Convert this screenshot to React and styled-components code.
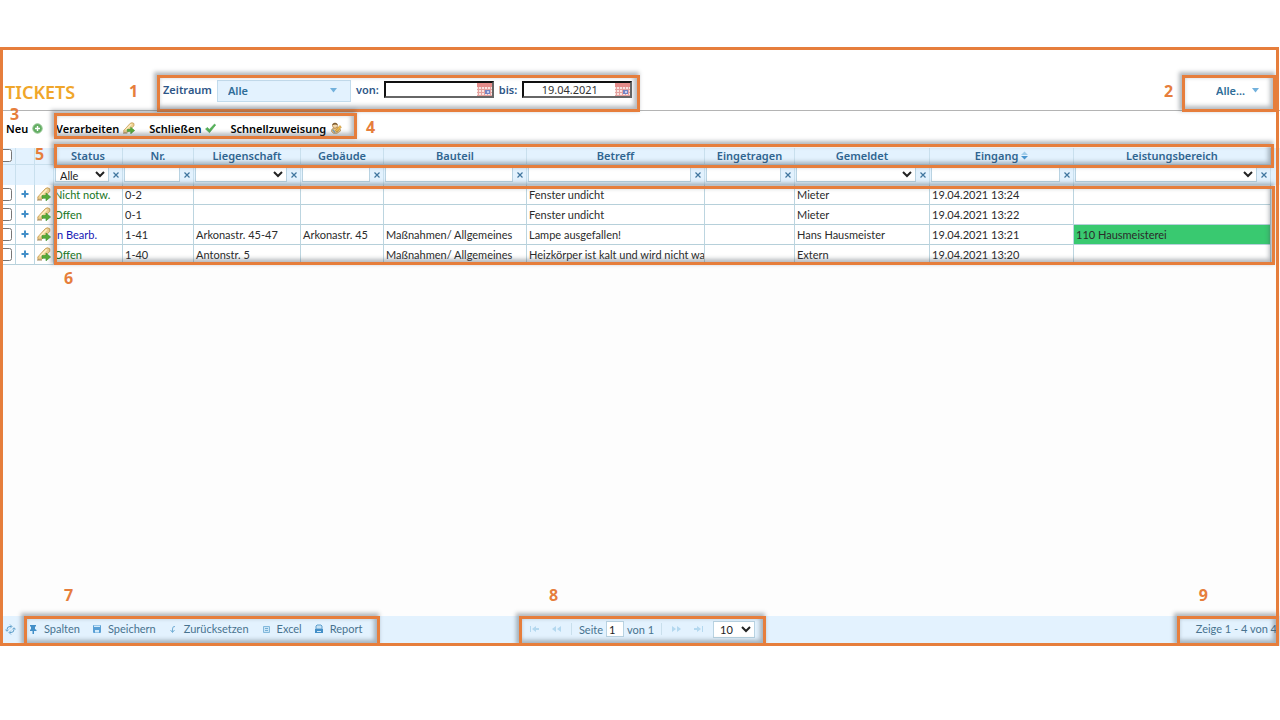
import React from "react";
import styled, { createGlobalStyle } from "styled-components";

const GlobalStyle = createGlobalStyle`
    *{
        box-sizing: border-box;
    }

    body{
        background: #ffffff;
        font-family: "Noto Sans", "Open Sans", sans-serif;
        font-size: 11px;
        margin: 0;
    }

    button, input, select{
        color: inherit;
        font: inherit;
        margin: 0;
    }
`;

const Page = styled.div`
    display: flex;
    flex-direction: column;
    min-height: 100vh;
    padding: 47px 0 74px;
`;

const Shell = styled.main`
    display: flex;
    flex: 1;
    flex-direction: column;
    overflow: hidden;
    position: relative;

    &::after{
        border: 3px solid #e67e3c;
        content: "";
        inset: 0 1px 0 0;
        pointer-events: none;
        position: absolute;
        z-index: 3;
    }
`;

const Outline = styled.div`
    border: 3px solid #e67e3c;
    box-shadow: -2px -2px 4px 1px rgba(70, 80, 90, 0.4), inset -2px -2px 4px 1px rgba(70, 80, 90, 0.4);
    inset: ${({ $inset }) => $inset || "0"};
    pointer-events: none;
    position: absolute;
    z-index: 2;
`;

const HeadOutline = styled(Outline)`
    height: 24px;
`;

const Marker = styled.span`
    color: #e67e3c;
    font-family: "Noto Sans", "Open Sans", sans-serif;
    font-size: 16px;
    font-weight: 700;
    left: ${({ $left }) => $left};
    line-height: 16px;
    position: absolute;
    top: ${({ $top }) => $top};
    z-index: 2;
`;

const Header = styled.header`
    border-bottom: 1px solid #b4b4b4;
    color: #2e5687;
    display: flex;
    font-weight: 600;
    height: 64px;
    padding: 28px 4px 0 5px;
    position: relative;

    h1{
        color: #f0a62a;
        font-size: 18px;
        font-weight: 600;
        line-height: 34px;
        margin: 0;
        width: 152px;
    }
`;

const PeriodFilter = styled.div`
    display: flex;
    gap: 5px;
    height: 37px;
    padding: 5px 8px 0 6px;
    position: relative;

    label{
        line-height: 20px;
    }
`;

const Dropdown = styled.div`
    color: #2f6d98;
    height: 22px;
    position: relative;
    width: ${({ $plain }) => ($plain ? "54px" : "134px")};

    select{
        appearance: none;
        background: ${({ $plain }) => ($plain ? "transparent" : "#e3f2fe")};
        border: ${({ $plain }) => ($plain ? "0" : "1px solid #c3dced")};
        border-radius: 0;
        height: 100%;
        padding: ${({ $plain }) => ($plain ? "0 0 2px" : "0 10px 1px")};
        width: 100%;
    }

    svg{
        pointer-events: none;
        position: absolute;
        right: ${({ $plain }) => ($plain ? "11px" : "14px")};
        top: 8px;
    }
`;

const DateField = styled.div`
    background: #ffffff;
    border: 2px solid;
    border-color: #111111 #666666 #666666 #111111;
    color: #333333;
    display: flex;
    font-weight: 400;
    height: 17px;
    margin-top: 1px;
    width: 110px;

    input{
        border: 0;
        flex: 1;
        height: 13px;
        min-width: 0;
        padding: 0;
        text-align: center;
    }

    button{
        background: none;
        border: 0;
        display: flex;
        height: 13px;
        padding: 0;
    }
`;

const ScopeFilter = styled.div`
    height: 37px;
    margin-left: auto;
    padding: 5px 6px 0 34px;
    position: relative;
    width: 94px;
`;

const Toolbar = styled.div`
    align-items: flex-start;
    display: flex;
    height: 37px;
    padding: 2px 0 0 6px;
    position: relative;
`;

const ActionGroup = styled.div`
    display: flex;
    gap: 14px;
    padding: 0 15px 0 2px;
    position: relative;
`;

const Action = styled.button`
    align-items: center;
    background: none;
    border: 0;
    color: #000000;
    display: flex;
    font-weight: 600;
    gap: 4px;
    height: 26px;
    padding: 4px 0 0;
    width: ${({ $width }) => $width || "auto"};
`;

const GridArea = styled.section`
    background: #fdfdfd;
    flex: 1;
    position: relative;
`;

const TableHolder = styled.div`
    background: linear-gradient(#e3f2fe, #e3f2fe) 0 0 / 100% 37px no-repeat;
    padding-right: 9px;
    position: relative;
`;

const Table = styled.table`
    border-collapse: separate;
    border-spacing: 0;
    color: #2b2b2b;
    table-layout: fixed;
    width: 100%;

    th, td{
        border-right: 1px solid #bcd5e0;
        overflow: hidden;
        padding: 0;
        white-space: nowrap;
    }

    th{
        border-bottom: 1px solid #c9e0ee;
        border-right-color: #c9e0ee;
        color: #2f6591;
        font-weight: 600;
        height: 17px;
        line-height: 15px;
        padding-bottom: 1px;
        text-align: center;
    }

    .filters td{
        border-right-color: #c9e0ee;
        height: 20px;
        vertical-align: top;
    }

    tbody{
        font-family: Lato, "Noto Sans", sans-serif;
    }

    tbody td{
        background: #ffffff;
        border-bottom: 1px solid #b6d0da;
        height: 20px;
        line-height: 19px;
        padding-left: 2px;
    }

    tbody .status{
        padding-left: 0;
    }

    tbody .area{
        background: #39c970;
    }

    tbody .tool{
        padding: 0;
        text-align: center;
    }

    tbody .tool button{
        background: none;
        border: 0;
        display: block;
        height: 18px;
        margin: 0 auto;
        padding: 1px 0 0;
    }

    input[type="checkbox"]{
        display: block;
        height: 13px;
        margin: 0 0 0 -1px;
        width: 13px;
    }
`;

const StatusText = styled.span`
    color: ${({ $open }) => ($open ? "#17741d" : "#1616b4")};
`;

const Filter = styled.div`
    display: flex;
    height: 16px;
    margin: 2px 0 0 1px;

    input, select{
        background: #ffffff;
        border: 1px solid #b9d3e2;
        border-radius: 0;
        color: #222222;
        flex: 1;
        font-family: Lato, "Noto Sans", sans-serif;
        height: 15px;
        line-height: 13px;
        min-width: 0;
        padding: 0;
    }

    button{
        align-items: center;
        background: none;
        border: 0;
        color: #2f6591;
        display: flex;
        justify-content: center;
        padding: 0;
        width: 13px;
    }
`;

const Footer = styled.footer`
    background: #e3f2fe;
    color: #48738f;
    display: grid;
    font-family: Lato, "Noto Sans", sans-serif;
    grid-template-columns: 1fr auto 1fr;
    height: 30px;
    padding-right: 1px;
    position: relative;
`;

const FooterSide = styled.div`
    display: flex;
    justify-content: ${({ $end }) => ($end ? "flex-end" : "flex-start")};
`;

const FooterGroup = styled.div`
    align-items: center;
    display: flex;
    gap: ${({ $gap }) => $gap};
    height: 30px;
    padding: ${({ $padding }) => $padding};
    position: relative;
    white-space: nowrap;
`;

const PagerGroup = styled(FooterGroup)`
    margin-left: 6px;
`;

const FooterButton = styled.button`
    align-items: center;
    background: none;
    border: 0;
    display: flex;
    gap: 6px;
    height: 22px;
    padding: 0;
`;

const StepButton = styled(FooterButton)`
    padding: 0 3px;
`;

const RefreshButton = styled(FooterButton)`
    justify-content: center;
    margin: 2px 4px 0 0;
    width: 20px;
`;

const PageInput = styled.input`
    && {
        background: #ffffff;
        border: 1px solid #b9d3e2;
        color: #222222;
        height: 16px;
        margin: 0 3px;
        padding: 0 2px;
        width: 18px;
    }
`;

const PageSize = styled.select`
    && {
        background: #ffffff;
        border: 1px solid #b9d3e2;
        border-radius: 0;
        color: #222222;
        height: 17px;
        padding: 0 2px;
        width: 42px;
    }
`;

const Separator = styled.i`
    background: #c9dfec;
    height: 12px;
    width: 1px;
`;

const Triangle = () => (
    <svg width="7" height="5" viewBox="0 0 7 5"><path d="M0 0h7L3.500 4.500z" fill="#72b1dc" /></svg>
);

const CalendarIcon = () => (
    <svg width="15" height="13" viewBox="0 0 15 13">
        <rect width="15" height="13" fill="#f9e3e0" />
        <rect width="15" height="4" fill="#e58c8a" />
        <path d="M0 6.500h15M0 9.500h15M0 12.500h15M1.500 4v9M4.500 4v9M7.500 4v9M10.500 4v9M13.500 4v9" stroke="#e5a19f" />
        <rect x="8" y="7" width="5" height="4" fill="#7484c4" />
        <rect x="10" y="8" width="2" height="2" fill="#c8d0ef" />
    </svg>
);

const PlusBall = () => (
    <svg width="11" height="11" viewBox="0 0 11 11">
        <circle cx="5.500" cy="5.500" r="4.700" fill="#62ad62" stroke="#8fc48d" />
        <path d="M5.500 3v5M3 5.500h5" stroke="#ffffff" strokeWidth="1.400" />
    </svg>
);

const EditIcon = ({ size = 12 }) => (
    <svg width={size} height={size} viewBox="0 0 14 14">
        <path d="M0.800 10L8.500 1.500Q10.500 0 12.800 1.800L12.800 4.500L5 12L1 12.500z" fill="#eed293" stroke="#c59a50" strokeWidth="0.900" />
        <path d="M3 9.200L9.800 2.500" stroke="#fff0c8" strokeWidth="1.400" />
        <path d="M5 8.600h4V6l4.600 4-4.600 3.800v-2.600H5z" fill="#58ad39" stroke="#469735" strokeWidth="0.700" />
        <path d="M0 13h5" stroke="#a48b62" />
    </svg>
);

const CheckIcon = () => (
    <svg width="11" height="11" viewBox="0 0 11 11">
        <path d="M0.500 6L2.500 4.500L4.300 6.500L9.500 1L10.700 2L4.500 9.700z" fill="#55b255" stroke="#4aa355" strokeWidth="0.600" />
    </svg>
);

const AssignIcon = () => (
    <svg width="12" height="12" viewBox="0 0 12 12">
        <path d="M1.500 9.500Q1 6.500 4 6L8 5.500Q11 6.500 10.500 9L7 11.300H3.500z" fill="#efc887" stroke="#b58a4a" strokeWidth="0.700" />
        <path d="M2.500 3.500Q2.800 1.200 5 1.200T7.600 3.500Q7.500 6.200 5 6.200T2.500 3.500z" fill="#f4d9aa" stroke="#a97a40" strokeWidth="0.700" />
        <path d="M2 3.200Q2.500 0.500 5.200 0.700Q7.500 1 7.800 3L5 2.500z" fill="#7c5a30" />
        <path d="M5.500 8.500L9.800 3.600L11.400 5L7 10z" fill="#f1bd4c" stroke="#b98433" strokeWidth="0.600" />
        <path d="M2.500 7.500L5 10.500" stroke="#7aa0bb" strokeWidth="1.400" />
    </svg>
);

const RowPlus = () => (
    <svg width="8" height="14" viewBox="0 0 8 14"><path d="M4 3.500v7M0.500 7h7" stroke="#438fc8" strokeWidth="2" /></svg>
);

const ClearIcon = () => (
    <svg width="6" height="6" viewBox="0 0 6 6"><path d="M0.500 0.500l5 5M5.500 0.500l-5 5" stroke="#3f759e" strokeWidth="1.200" /></svg>
);

const SortIcon = () => (
    <svg width="7" height="9" viewBox="0 0 7 9"><path d="M0 4L3.500 0.500L7 4z" fill="#9fcbe8" /><path d="M0 5L3.500 8.500L7 5z" fill="#4a96cf" /></svg>
);

const RefreshIcon = () => (
    <svg width="11" height="11" viewBox="0 0 11 11" fill="none" stroke="#5a9cc8">
        <path d="M2 7V5.500Q2 2.500 5 2.500H6.500M9 4V5.500Q9 8.500 6 8.500H4.500" />
        <path d="M5 0.500L7 2.500L5 4.500M6 6.500L4 8.500L6 10.500M0.300 5.500L2 7.300L3.700 5.500M7.300 5.500L9 3.700L10.700 5.500" strokeWidth="0.800" />
    </svg>
);

const footerIcons = {
    pin: <path d="M2 1h6v1.500H7V5l1.500 1v1H6v3H4.500V7H2V6l1-1V2.500H2z" fill="#438fc8" />,
    save: <><rect x="1" y="1" width="8" height="8" rx="1" fill="#5aa0d6" /><path d="M2 1.500h6v1.500H2zM3 6h4v2.500H3z" fill="#d2eafa" /></>,
    reset: <path d="M7 2.500Q4.500 2 4.500 5V8M2.500 6l2 2.500 2-2.500" fill="none" stroke="#75afd5" />,
    excel: <><path d="M2.500 2.500h6v6h-6z" fill="#cae5f7" stroke="#83b9dc" /><path d="M4 4.500h3M4 6.500h3" stroke="#75afd5" /></>,
    report: <><path d="M2 5V2l1-1h4l1 1v3z" fill="#c6e2f5" stroke="#5e9fcd" /><path d="M1 5h8v4H1z" fill="#438fc8" /><path d="M3 7.500h4" stroke="#d2eafa" /></>,
};

const pagerIcons = {
    first: "M1 1v6H0V1zM2 4l4-3v6zM6 3h3v2H6z",
    prev: "M0 4l4-3v6zM5 4l4-3v6z",
    next: "M0 1l4 3-4 3zM5 1l4 3-4 3z",
    last: "M0 3h3v2H0zM3 1l4 3-4 3zM8 1h1v6H8z",
};

const FooterIcon = ({ name }) => <svg width="10" height="10" viewBox="0 0 10 10">{footerIcons[name]}</svg>;

const PagerButton = ({ name, label }) => (
    <StepButton disabled aria-label={label}>
        <svg width="9" height="8" viewBox="0 0 9 8"><path d={pagerIcons[name]} fill="#b4d8ef" /></svg>
    </StepButton>
);

const columns = [
    { title: "Status", width: 69, filter: "select", value: "Alle" },
    { title: "Nr.", width: 71, filter: "input" },
    { title: "Liegenschaft", width: 107, filter: "select" },
    { title: "Gebäude", width: 83, filter: "input" },
    { title: "Bauteil", width: 143, filter: "input" },
    { title: "Betreff", width: 178, filter: "input" },
    { title: "Eingetragen", width: 90, filter: "input" },
    { title: "Gemeldet", width: 135, filter: "select" },
    { title: "Eingang", width: 144, filter: "input", sorted: true },
    { title: "Leistungsbereich", width: 197, filter: "select" },
];

const tickets = [
    ["Nicht notw.", "0-2", "", "", "", "Fenster undicht", "", "Mieter", "19.04.2021 13:24", ""],
    ["Offen", "0-1", "", "", "", "Fenster undicht", "", "Mieter", "19.04.2021 13:22", ""],
    ["In Bearb.", "1-41", "Arkonastr. 45-47", "Arkonastr. 45", "Maßnahmen/ Allgemeines", "Lampe ausgefallen!", "", "Hans Hausmeister", "19.04.2021 13:21", "110 Hausmeisterei"],
    ["Offen", "1-40", "Antonstr. 5", "", "Maßnahmen/ Allgemeines", "Heizkörper ist kalt und wird nicht wa", "", "Extern", "19.04.2021 13:20", ""],
];

const ColumnFilter = ({ column }) => (
    <Filter>
        {column.filter === "select" ? (
            <select aria-label={column.title}><option>{column.value || ""}</option></select>
        ) : (
            <input type="text" aria-label={column.title} />
        )}
        <button aria-label={`${column.title} leeren`}><ClearIcon /></button>
    </Filter>
);

const TicketTable = () => (
    <Table>
        <colgroup>
            <col style={{ width: 16 }} />
            <col style={{ width: 19 }} />
            <col style={{ width: 19 }} />
            {columns.map(({ title, width }) => <col key={title} style={{ width }} />)}
        </colgroup>
        <thead>
            <tr>
                <th><input type="checkbox" aria-label="Alle auswählen" /></th>
                <th />
                <th />
                {columns.map(({ title, sorted }) => (
                    <th key={title} scope="col">{title}{sorted && <> <SortIcon /></>}</th>
                ))}
            </tr>
            <tr className="filters">
                <td />
                <td />
                <td />
                {columns.map((column) => <td key={column.title}><ColumnFilter column={column} /></td>)}
            </tr>
        </thead>
        <tbody>
            {tickets.map((ticket) => (
                <tr key={ticket[1]}>
                    <td className="tool"><input type="checkbox" aria-label={`Ticket ${ticket[1]}`} /></td>
                    <td className="tool"><button aria-label="Aufklappen"><RowPlus /></button></td>
                    <td className="tool"><button aria-label="Bearbeiten"><EditIcon size={14} /></button></td>
                    {ticket.map((text, i) => {
                        if (i === 0) {
                            return <td key={i} className="status"><StatusText $open={text !== "In Bearb."}>{text}</StatusText></td>;
                        }
                        return <td key={i} className={i === 9 && text ? "area" : undefined}>{text}</td>;
                    })}
                </tr>
            ))}
        </tbody>
    </Table>
);

const App = () => (
    <Page>
        <GlobalStyle />
        <Shell>
            <Header>
                <h1>TICKETS</h1>
                <PeriodFilter>
                    <label htmlFor="period">Zeitraum</label>
                    <Dropdown>
                        <select id="period"><option>Alle</option></select>
                        <Triangle />
                    </Dropdown>
                    <label htmlFor="from">von:</label>
                    <DateField>
                        <input id="from" type="text" />
                        <button aria-label="Kalender von"><CalendarIcon /></button>
                    </DateField>
                    <label htmlFor="until">bis:</label>
                    <DateField>
                        <input id="until" type="text" defaultValue="19.04.2021" />
                        <button aria-label="Kalender bis"><CalendarIcon /></button>
                    </DateField>
                    <Outline />
                    <Marker $left="-28px" $top="8px">1</Marker>
                </PeriodFilter>
                <ScopeFilter>
                    <Dropdown $plain>
                        <select aria-label="Bereich"><option>Alle...</option></select>
                        <Triangle />
                    </Dropdown>
                    <Outline />
                    <Marker $left="-18px" $top="8px">2</Marker>
                </ScopeFilter>
            </Header>

            <Toolbar>
                <Action $width="48px">Neu <PlusBall /></Action>
                <Marker $left="10px" $top="-5px">3</Marker>
                <ActionGroup>
                    <Action>Verarbeiten <EditIcon /></Action>
                    <Action>Schließen <CheckIcon /></Action>
                    <Action>Schnellzuweisung <AssignIcon /></Action>
                    <Outline />
                    <Marker $left="calc(100% + 9px)" $top="6px">4</Marker>
                </ActionGroup>
            </Toolbar>

            <GridArea>
                <TableHolder>
                    <TicketTable />
                    <HeadOutline $inset="-4px 6px auto 54px" />
                    <Marker $left="35px" $top="-2px">5</Marker>
                    <Outline $inset="38px 5px 0 54px" />
                    <Marker $left="64px" $top="122px">6</Marker>
                </TableHolder>
            </GridArea>

            <Footer>
                <FooterSide>
                    <RefreshButton aria-label="Aktualisieren"><RefreshIcon /></RefreshButton>
                    <FooterGroup $gap="12px" $padding="0 18px 5px 4px">
                        <FooterButton><FooterIcon name="pin" />Spalten</FooterButton>
                        <FooterButton><FooterIcon name="save" />Speichern</FooterButton>
                        <FooterButton><FooterIcon name="reset" />Zurücksetzen</FooterButton>
                        <FooterButton><FooterIcon name="excel" />Excel</FooterButton>
                        <FooterButton><FooterIcon name="report" />Report</FooterButton>
                        <Outline />
                        <Marker $left="40px" $top="-29px">7</Marker>
                    </FooterGroup>
                </FooterSide>
                <PagerGroup $gap="7px" $padding="0 11px 4px 8px">
                    <PagerButton name="first" label="Erste Seite" />
                    <PagerButton name="prev" label="Vorherige Seite" />
                    <Separator />
                    <label>Seite<PageInput type="text" defaultValue="1" />von 1</label>
                    <Separator />
                    <PagerButton name="next" label="Nächste Seite" />
                    <PagerButton name="last" label="Letzte Seite" />
                    <PageSize aria-label="Zeilen pro Seite"><option>10</option></PageSize>
                    <Outline />
                    <Marker $left="30px" $top="-29px">8</Marker>
                </PagerGroup>
                <FooterSide $end>
                    <FooterGroup $gap="0" $padding="0 2px 5px 19px">
                        Zeige 1 - 4 von 4
                        <Outline />
                        <Marker $left="22px" $top="-29px">9</Marker>
                    </FooterGroup>
                </FooterSide>
            </Footer>
        </Shell>
    </Page>
);

export default App;
